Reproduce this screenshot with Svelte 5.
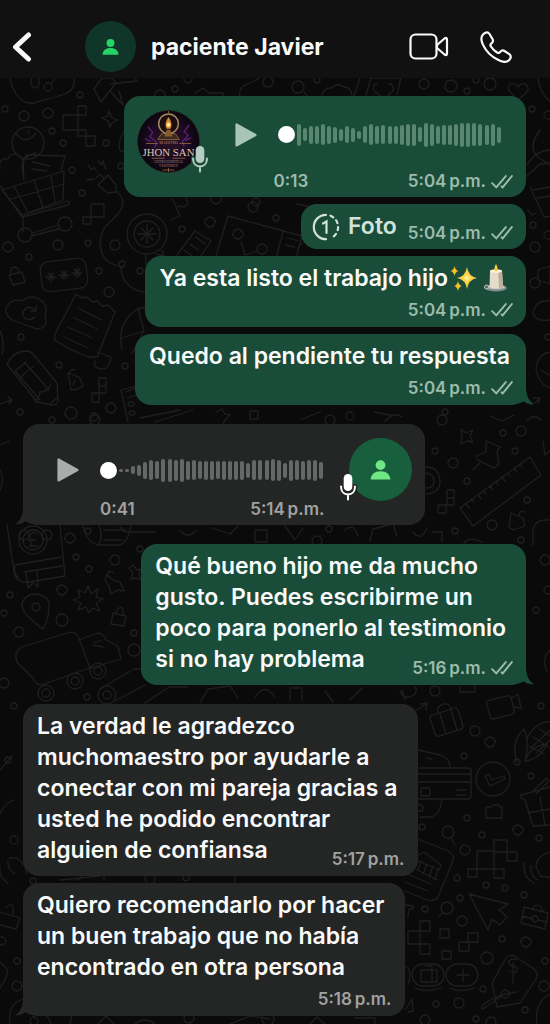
<script>
  const messages = [
    {
      kind: 'voice', out: true, length: '0:13', time: '5:04',
      bars: [22, 13, 18, 18, 21, 18, 16, 12, 17, 14, 8, 17, 21, 18, 19, 18, 18, 20, 22, 22, 15, 24, 22, 18, 20, 20, 22, 24, 24, 23, 22, 20, 22, 16]
    },
    { kind: 'photo', out: true, time: '5:04' },
    { kind: 'text', out: true, text: 'Ya esta listo el trabajo hijo', emoji: true, time: '5:04' },
    { kind: 'text', out: true, text: 'Quedo al pendiente tu respuesta', time: '5:04', tail: true },
    {
      kind: 'voice', out: false, length: '0:41', time: '5:14', tail: true, first: true,
      bars: [3, 3, 8, 11, 17, 20, 18, 23, 23, 21, 23, 19, 20, 18, 19, 19, 18, 19, 19, 19, 19, 15, 20, 20, 20, 22, 21, 15, 21, 20, 19, 20, 21, 17]
    },
    {
      kind: 'text', out: true, time: '5:16', tail: true, first: true, long: true,
      text: 'Qué bueno hijo me da mucho\ngusto. Puedes escribirme un\npoco para ponerlo al testimonio',
      last: 'si no hay problema'
    },
    {
      kind: 'text', out: false, time: '5:17', first: true, long: true,
      text: 'La verdad le agradezco\nmuchomaestro por ayudarle a\nconectar con mi pareja gracias a\nusted he podido encontrar',
      last: 'alguien de confiansa'
    },
    {
      kind: 'text', out: false, time: '5:18', tail: true, long: true,
      text: 'Quiero recomendarlo por hacer\nun buen trabajo que no había\nencontrado en otra persona'
    }
  ];

  /* Loose rings scattered between the wallpaper drawings: x, y, radius */
  const rings = [
    [5, 109, 3], [24, 116, 5], [48, 113, 5], [52, 131, 3], [80, 95, 3], [63, 143, 3], [106, 143, 3], [72, 170, 3], [82, 193, 3],
    [8, 247, 5], [29, 257, 3], [58, 245, 5], [88, 243, 3], [115, 245, 5], [99, 271, 3], [109, 292, 5], [21, 337, 3],
    [59, 365, 3], [125, 366, 3], [20, 412, 3], [71, 413, 6], [94, 417, 4], [111, 408, 5], [140, 271, 3], [121, 166, 3],
    [216, 199, 5], [253, 207, 5], [210, 222, 5], [182, 229, 3], [276, 218, 3],
    [70, 538, 5], [76, 557, 3], [89, 569, 3], [115, 560, 5], [62, 590, 5], [10, 595, 3], [4, 613, 3], [62, 620, 6],
    [19, 632, 5], [134, 633, 3], [134, 650, 6], [4, 683, 5], [14, 706, 3], [87, 697, 3], [140, 549, 3],
    [532, 109, 3], [533, 225, 3], [535, 247, 5], [548, 115, 4], [535, 283, 5], [548, 235, 4], [548, 337, 3], [445, 412, 3], [442, 420, 5],
    [330, 420, 5], [350, 416, 4], [52, 420, 3], [95, 420, 5], [521, 431, 5], [503, 433, 3], [515, 451, 3], [453, 463, 5], [435, 451, 3],
    [467, 481, 3], [527, 500, 3], [492, 525, 5], [455, 531, 3], [521, 540, 3], [88, 531, 3], [47, 535, 5], [24, 535, 5], [317, 541, 5], [329, 529, 3],
    [435, 691, 5], [475, 731, 5], [490, 742, 5], [464, 756, 3], [541, 706, 3], [531, 776, 3], [467, 818, 3], [422, 827, 3], [482, 835, 3],
    [518, 830, 5], [539, 838, 3], [465, 850, 5], [457, 878, 3], [486, 885, 3], [505, 888, 3], [524, 895, 3], [460, 898, 3],
    [425, 909, 3], [462, 921, 5], [502, 939, 3], [526, 942, 5], [487, 958, 6], [545, 961, 3], [544, 986, 5], [483, 989, 3], [436, 1004, 3],
    [459, 1003, 5], [525, 1010, 3], [476, 1019, 3], [491, 1022, 5], [425, 1020, 5], [2, 941, 4], [17, 961, 3], [17, 986, 5], [34, 1021, 4],
    [189, 1018, 5], [268, 1019, 6], [150, 879, 5], [186, 878, 3], [33, 881, 3], [175, 89, 3], [188, 79, 4], [317, 80, 3],
    [451, 86, 6], [467, 91, 3], [476, 80, 3], [490, 84, 6], [160, 95, 5], [424, 84, 5], [256, 202, 4], [548, 590, 4], [536, 610, 3], [545, 560, 5], [8, 760, 3], [14, 840, 4]
  ];
</script>

{#snippet person()}
  <svg class="person" viewBox="0 0 24 24" aria-hidden="true">
    <circle cx="12" cy="7" r="5.6" />
    <path d="M.8 23.5c0-5.7 4.6-9.5 11.2-9.5s11.200 3.800 11.200 9.500z" />
  </svg>
{/snippet}

{#snippet mic()}
  <svg class="mic" viewBox="0 0 18 28" aria-hidden="true">
    <path class="halo" d="M2 13.500c0 5 3 8 7 8s7-3 7-8M9 21.500v5M9 6.500v7" />
    <rect x="4.700" y="1" width="8.600" height="17" rx="4.300" />
    <path class="stand" d="M2 13.500c0 5 3 8 7 8s7-3 7-8M9 21.500v5" />
  </svg>
{/snippet}

{#snippet meta(m)}
  <span class="meta">
    <time>{m.time}&#8239;p.m.</time>
    {#if m.out}
      <svg class="ticks" viewBox="0 0 23 16" role="img" aria-label="Entregado">
        <path d="M1.200 9.200l4.300 4.500L15.500 1.800M11 12.500l1.200 1.200L21.800 1.800" />
      </svg>
    {/if}
  </span>
{/snippet}

{#snippet tail(m)}
  {#if m.tail}
    <svg class="tail" viewBox="0 0 26 20" aria-hidden="true">
      <path d="M0 20C7 20 12 18.500 15.500 16.300C18.500 18.800 22 19.500 26 19.200C21 16 18 11 18 2V0H4z" />
    </svg>
  {/if}
{/snippet}

<div class="app">
  <header>
    <button class="icon back" aria-label="Atrás">
      <svg viewBox="0 0 20 30"><path d="M16.500 3L3.500 15l13 12" /></svg>
    </button>
    <span class="avatar contact">{@render person()}</span>
    <h1>paciente Javier</h1>
    <button class="icon video" aria-label="Videollamada">
      <svg viewBox="0 0 40 28">
        <rect x="1.500" y="1.500" width="26" height="24" rx="5" />
        <path d="M28 12l7.500-6.500q2.500-1.500 2.500 1v14q0 2.500-2.500 1L28 15z" />
      </svg>
    </button>
    <button class="icon phone" aria-label="Llamar">
      <svg viewBox="0 0 32 32">
        <path d="M3 3.500C5.500.8 8 .8 9.500 3l3 5c1 1.800.4 3.200-1 4.300c-1.300 1-1.400 2-.6 3.200c1.700 2.600 3.700 4.500 6.200 6c1.300.8 2.200.6 3.200-.7c1.200-1.400 2.600-1.800 4.200-.8l4.800 3.200c2 1.400 2 3.800-.3 6c-2.800 2.500-7 2-11.500-.7C11 25.300 5.800 19.700 2.900 13.600C1 9.500.6 6.100 3 3.500z" />
      </svg>
    </button>
  </header>

  <main>
    <svg class="wallpaper" viewBox="0 78 550 946" preserveAspectRatio="xMidYMin slice" aria-hidden="true">
      {#each rings as [x, y, r]}
        <circle cx={x} cy={y} {r} />
      {/each}
      <!-- palette, hammer, search, cloud, paw, heart -->
      <path d="M10 78c3 17 13 27 24 25c10-3 22-6 31-9c8-3 10-9 9-16" />
      <ellipse cx="35" cy="82" rx="4" ry="6" /><circle cx="48" cy="87" r="4" /><path d="M51 84l4-6" />
      <path d="M94 89l8-11h10l4 5l-15 19zM111 84l26-3l-6-10M111 92l12 13l-4-14" />
      <path d="M195 93l8-5l6 5h14v4M304 92l4 6M322 95q2-8 10-7q5-6 12-1q7 0 8 8M240 96c-3-10 8-12 20-18M360 78l-6 18M366 95l5-17h30l-4 16M377 84c-5 0-5 8 0 9c5 6 11 5 13 0c5-2 4-9-1-9" />
      <circle cx="298" cy="87" r="6" /><circle cx="268" cy="82" r="5" />
      <path d="M518 100l-9-9c-4-6 5-11 9-4c5-7 13-1 9 5zM538 78q2 18 14 24" />
      <!-- pixels and sparkle -->
      <path d="M78 106h8v9h-8zM63 115h15v15H63zM78 130h8v6h-8zM86 136h9v10h-9zM109 111l3 7 6 2-6 3-2 4-2-6-6-3 6-2z" />
      <path d="M91 204h13v13H91zM83 217h8v7h-8zM99 378h7v15h-7zM99 386h7M92 393h7v9h-7z" />
      <!-- shopping cart with ball and fruit -->
      <circle cx="28" cy="143" r="16" /><path d="M16 134q10 12 20-1M19 137l-2-3M28 130l1 3M36 153q-6 1-12 6" />
      <path d="M0 169q-2-12 8-10q2-7 10-4q7 4 4 12l2 13M26 155l39 1-4 14M26 155q-4 7-2 20M33 162l17 4M33 169l14 2" />
      <path d="M2 190l62-19-1 29-41 15zM14 186l14 27M34 180l9 28M51 175l4 27M8 200l56-16M22 215l46-14q3 3 0 4l-46 12L0 186M23 217v15M32 233l27-8M31 236l28-7" />
      <circle cx="25" cy="235" r="7" /><circle cx="65" cy="224" r="7" />
      <!-- plug and cable -->
      <path d="M98 185l10-10 8 10v7l-8 1zM96 178l4-4M101 175l3 3M116 191c16 13 0 25-8 33c-12 12-10 35 5 40l8 3M88 165l4 5 2-3 3 5M98 161l4 4 1-4 3 8M87 180l7-1" />
      <circle cx="122" cy="264" r="3" />
      <path d="M121 267c0 15 12 26 28 25M119 145q2-12 9-18M119 145q1 10 6 5" />
      <!-- turntable and charts -->
      <circle cx="147" cy="234" r="20" /><circle cx="147" cy="234" r="13" />
      <path d="M147 225v18M138 234h18M141 228l12 12M153 228l-12 12M162 250l2 6-8-2M172 198l8 18M173 196q10-4 14 4q2 9-9 6M180 216l-10 4M146 255v10" />
      <path d="M177 255l18-24 16 10-12 18M184 250l8 6M190 244l8 6M196 237l9 7" />
      <path d="M216 256l12-40 74 20-6 22M283 232l-8 30M288 238l10 3M286 245l8 2M241 242l4 13M245 255l12-4" />
      <circle cx="238" cy="234" r="5" /><circle cx="262" cy="249" r="5" />
      <path d="M297 204l14 3-4 20M298 248l4-5" />
      <!-- padlock, password, cloud, receipt, pencil -->
      <path d="M9 275l13-3 3 10-12 3zM11 274q-1-7 4-7q4 1 4 6" />
      <rect x="41" y="260" width="46" height="30" rx="8" transform="rotate(-7 64 275)" />
      <path d="M51 272v10M46 277h10M48 273l6 7M54 273l-6 7M64 270v10M59 275h10M61 271l6 7M67 271l-6 7M77 268v10M72 273h10M74 269l6 7M80 269l-6 7" />
      <path d="M12 320q-10-8-4-15q5-7 14-4q10-8 20 0q6 5 3 14q4 13-8 14zM35 310q-5-5-10-1q-5 6 1 10q5 2 9-2M36 306v5h-5" />
      <path d="M76 294l6 4 5-1 5 5 5-1 5 5 6-1 7 7-18 45-8 0q-17-6-33-16q-3-2 0-9zM78 308l24 12M73 317l24 12M68 327l24 11M64 337l24 11M97 352l14 5q-2 13-9 12q-10-1-7-8" />
      <path d="M7 364q5-12 18-13q5 0 8 3l24 29 1 18q-2 5-6 4l-15-3zM14 372l12-10M20 379q6-9 13-12M35 402q5-5 5-10q8 0 11-8M25 363l24 27M16 372l24 28M51 403l7-6" />
      <path d="M68 373l11 4 4 9-5 3-7 1-2-12zM69 374q1-6 6-4M75 380l-2 5M0 331q5 10 2 23M0 404l8-3 4-1M8 397l4 3-3 4M122 349c-5-22 7-40 24-42M138 308l6 23-22 7M144 331l-12 22M122 390l17-5M121 390l7 32M126 392l12-5M127 398l10-3" />
      <ellipse cx="131" cy="404" rx="3" ry="2" /><ellipse cx="132" cy="413" rx="3" ry="2" />
      <!-- strip around the incoming voice note -->
      <path d="M0 445l9-4M0 470q5 10 0 20M140 418l40-8M155 422l38-12M216 412l6-3 3 5 5 1-5 5-2 4M250 411h8v8h-8zM300 420l20-8M374 412l16 3M385 421q10-10 17-4M490 416l12 5 12-6" />
      <path d="M461 429l5 4 7-3-3 6 3 6-6-1-6 3 1-7zM486 441l14 6-3 4 2 13-5 4-16-8-2-4 10-4zM480 463l-7 7M543 441l2 14 9-8M527 421q6-8 14-1" />
      <path d="M460 508l70-51 11 18-68 51zM466 504l3 4M472 499l2 3M478 495l3 4M484 491l2 3M490 486l3 4M496 482l2 3M502 477l3 4M508 473l2 3M514 468l3 4M520 464l2 3" />
      <path d="M426 467q13 0 14 14q0 12-14 13M426 473q8 1 8 8q0 7-8 7M447 490h7v15h-7zM447 498h7M438 505h8v8h-8zM511 513l12 5 2 8-12 4-4-3zM519 515q0-5 6-3M533 545v-15q2-10 12-10h5M432 532h10v10M413 532q8 10 14-4M370 541l3-12 20-5 4 12M463 545q5-10 19-3" />
      <!-- bank book, van, pin and burst -->
      <path d="M7 525l7 47q3 12 15 10l36-6-5-51M15 565l46-8M24 572l38-6M15 565q-2 8 3 12M26 572l2 16 5-5 5 4-1-17" />
      <circle cx="33" cy="540" r="14" /><circle cx="33" cy="540" r="10" />
      <path d="M37 534q-6-4-7 2l1 9M28 540h8M29 546h9M83 525q2 16 15 20h22q9-4 11-20M98 545q6-7 1-20M104 530h22M104 540h18M120 527l5 5h30" />
      <path d="M43 629q-21-15-21-24q1-10 14-11q14 2 13 13q0 11-6 22z" /><circle cx="36" cy="607" r="4" />
      <path d="M88 586l3 8 7-5-2 8 7 2-7 4 4 8-8-3-3 5-3-6-8 3 3-7-8-3 7-3-2-7 7 3zM107 575l6 5 7 2 4 9-6-1-7 4-2-8-4-6zM107 575q1-6 7-2M133 565l4 5 4-1-2 6 2 5-5-2-5 1 2-6-4-5zM113 613l13 3-2 10-13-2zM116 613q2-8 7-4v6" />
      <path d="M17 662q-4-10 5-15l45-14q8-2 11 3l12 32-46 16q-7 3-11-6zM80 640l14-6q9-3 12 6l12 6 3 13-30 9M94 643l8-3M93 645l10 2" />
      <circle cx="46" cy="693" r="8" /><circle cx="46" cy="693" r="4" /><circle cx="75" cy="681" r="8" /><circle cx="75" cy="681" r="4" /><circle cx="98" cy="671" r="8" /><circle cx="98" cy="671" r="4" />
      <circle cx="107" cy="695" r="9" /><circle cx="107" cy="695" r="4" />
      <path d="M100 689l34-20h10M115 701l30-16M145 703l24-16h18M200 703l8-14 22-3 8 12M255 697q10-15 20 0M290 700v-12h12v12M325 691l8 11M350 700l12-12M400 691q4 10 14 4q4-5 1-8M402 690l3 10M460 686v6h15v-7" />
      <!-- right column -->
      <path d="M527 165q8-14 23-15M540 130q-13 18-2 27l12 8M527 176l13-12 10-1M530 187l14 30 8-1M533 190l17-3M537 198l13-2M528 210l4 5 4-2M538 270l12-4v18l-12-4zM550 301q-14-2-17 12q2 9 17 7M550 352q-12 2-14 16q2 16 14 20M540 370l10 5M530 405l6-3 3-3M533 398l7 0-2 6M550 650q-9 8-3 22" />
      <path d="M415 711l11-7M421 704l6-1-1 7" />
      <rect x="432" y="711" width="29" height="22" rx="3" transform="rotate(-18 447 722)" /><path d="M440 714l6 20M451 710l6 20M438 713q-2-7 5-9q7-1 8 5" />
      <rect x="488" y="698" width="25" height="19" rx="3" transform="rotate(-14 500 707)" /><path d="M512 698l6-4 3 14-7-1" />
      <path d="M517 762q-7-20 7-33q6 12 1 32q5-15 22-17q-7 15-22 17M527 738q10-17 23-16M529 746l15 8M533 737l16 10M539 729l11 7M531 748l19-18M536 753l14-13" />
      <circle cx="517" cy="762" r="3" />
      <path d="M418 750l22 5q10 3 10 12M426 758l6 1M418 768h50q3 0 3 3v25q0 3-3 3h-50M418 774h53M418 782h53M457 790h9M457 795h9M442 799q-2 17-12 18h-10M418 804q8 2 4 7h-5" />
      <rect x="421" y="788" width="9" height="8" rx="2" />
      <circle cx="493" cy="779" r="17" /><path d="M485 776l4-2 3 6 12-4 1 3-15 7z" />
      <path d="M486 807h5l2-2h6l1 2h2v11h-16zM521 795l29-8M521 795q-1 4 4 5l8 26 17-1M532 792l15-14 2 3-13 13M528 813l22-4M540 797l5 28" />
      <circle cx="448" cy="832" r="6" /><path d="M451 838l4 7M494 840h13v12h-13zM477 851h17v18h-17zM494 851v18h10v9h-10zM507 852h10v9h-10zM468 869h9v8h-9zM477 869h17" />
      <path d="M418 839l30 12q8 4 4 12l-14 34q-4 5-11 3l-22-9M407 874l24 10M405 882l23 9M418 855l6-3 17 13-2 5-21-9M421 861l-3 9M427 864l-4 10M433 866l-4 11M438 869l-3 11M417 870l20 10" />
      <path d="M524 863q-1 15 10 20M531 866q-1 10 7 14M550 852q-14 4-14 15l5 10q4-1 9 1" />
      <circle cx="447" cy="908" r="6" /><path d="M443 913l-5 4M405 905l8 1v3h-4l-1 8M469 894l39 10-9 6 8 7-7 8-8-6-4 11zM524 907l24 6-3 16-24-6zM533 909q1-5 7-3l3 5M522 916l11 3M538 920l9 2" />
      <circle cx="535" cy="919" r="3" />
      <path d="M420 921h10v10h-10zM408 931h12v13h-12zM420 931v23h10v-10h-22M440 929h9v9h-9zM468 933h10v9h-10zM459 942h10v9h-10zM442 951h9v8h-9z" />
      <rect x="412" y="964" width="32" height="22" rx="11" /><rect x="446" y="964" width="32" height="22" rx="11" /><path d="M421 970h16v12h-16zM425 966h7v16M457 975h12M463 969v13M405 966q8 4 3 18M415 988q10 5 26 0M450 988q10 5 24 0" />
      <path d="M492 983l14-25q6-5 10-1l18 12q5 5 2 10l-16 24-23 4zM504 994l-18 13q-5 4-4-1q10-10 34-14M509 971q8 3 8-1q-1-4-4-4q-5-1-4-5q3-4 8-1M513 963v20M405 1010l7-11 1 12-5 1M537 1024q-3-22 13-30" />
      <circle cx="505" cy="994" r="4" />
      <!-- left edge and foot -->
      <path d="M0 866q-2 11 8 17M8 860q-1 9 7 14M10 858q9-2 15 9l2 7M0 912l20 6-4 11-16-4M6 908q2-5 7-2v8M0 962l8 8-3 10-5 8M0 770l12-14M14 800q-10 4-14 14M10 1024q-3-20 13-25M36 1013q12-2 15 11M70 1024l2-9M98 1024l8-8 8 8M135 1024q10-8 20 0M230 1024l20-8 20 3M310 1024l7-7 8 7M355 1018h20v6M60 880l40-4M78 880l4-4M104 880v-4M235 882v-7h12" />
      <path d="M180 530q8 10 16 0M212 528l18 6 8-8M255 530h12v12h-12zM285 526l10 14 8-12M345 530q9-8 13 6" />
    </svg>

    {#each messages as m}
      <article class="bubble {m.kind}" class:out={m.out} class:first={m.first} class:long={m.long}>
        {@render tail(m)}
        {#if m.kind === 'voice'}
          <span class="portrait">
            {#if m.out}
              <svg class="avatar" viewBox="0 0 64 64" role="img" aria-label="Maestro Jhon San">
                <defs>
                  <radialGradient id="glow"><stop offset="0" stop-color="#2c1020" /><stop offset=".6" stop-color="#1d0b25" /><stop offset="1" stop-color="#09060c" /></radialGradient>
                </defs>
                <circle cx="32" cy="32" r="31.500" fill="url(#glow)" stroke="#2a1d22" />
                <path d="M11 17l5 6-3 4 7 6-2 5M53 15l-5 7 4 4-6 6 2 5M8 29l6 3M55 28l-6 3" fill="none" stroke="#55206a" stroke-width="1.500" />
                <path d="M21 30l4-6h14l4 6z" fill="#3c2a20" stroke="#7c6040" />
                <circle cx="32" cy="14" r="10" fill="#1b0e10" stroke="#a48a5d" stroke-width="1.500" />
                <path d="M28 27l2-7h4l2 7z" fill="#8a5a2c" />
                <path d="M32 7q5 7 2 12h-4q-3-5 2-12z" fill="#d98a35" /><circle cx="32" cy="15" r="2" fill="#ffe9a5" />
                <path d="M9 34h12M43 34h12M15 49h13M36 49h13M26 61h12M32 59v4M32 1v3" stroke="#9b6e42" stroke-width=".8" />
                <text x="32" y="35" font-size="4" fill="#b48d63" text-anchor="middle">MAESTRO</text>
                <text x="32" y="47" font-size="11" fill="#dbc9ae" text-anchor="middle">JHON SAN</text>
                <text x="32" y="54" font-size="3" fill="#a08777" text-anchor="middle">CENTRO ESPIRITUAL</text>
                <text x="32" y="58" font-size="3" fill="#a08777" text-anchor="middle">Y ESOTERICO</text>
              </svg>
            {:else}
              <span class="avatar">{@render person()}</span>
            {/if}
            {@render mic()}
          </span>
          <button class="icon play" aria-label="Reproducir">
            <svg viewBox="0 0 22 24"><path d="M1.500 1.500v21L20.500 12z" /></svg>
          </button>
          <div class="track">
            <i class="knob"></i>
            <div class="wave">
              {#each m.bars as h}<i style:height="{h}px"></i>{/each}
            </div>
          </div>
          <div class="info"><span>{m.length}</span>{@render meta(m)}</div>
        {:else if m.kind === 'photo'}
          <svg class="once" viewBox="0 0 28 28" aria-hidden="true">
            <path d="M14 1.800a12.200 12.200 0 0 0 0 24.400" />
            <path stroke-dasharray="3.200 4" d="M18.500 2.700a12.200 12.200 0 0 1 0 22.600" />
            <path d="M11 10.500l3.500-2v11.500" />
          </svg>
          <span class="label">Foto</span>
          {@render meta(m)}
        {:else}
          <p>{m.text}{#if m.emoji}<svg class="emoji sparkles" viewBox="0 0 28 28" role="img" aria-label="destellos">
              <path fill="#fbd043" d="M17 3q1.500 9.500 10 11q-8.500 1.500-10 11q-1.500-9.500-10-11q8.500-1.500 10-11z" />
              <path fill="#ffe98a" d="M17 9q.8 4.300 5 5q-4.200.7-5 5q-.8-4.300-5-5q4.200-.7 5-5z" />
              <path fill="#f5bf2c" d="M4.500 2q.8 4.200 4 5q-3.200.8-4 5q-.8-4.200-4-5q3.200-.8 4-5zM8 17q.8 4.200 4 5q-3.200.8-4 5q-.8-4.200-4-5q3.200-.8 4-5z" />
            </svg><svg class="emoji" viewBox="0 0 28 28" role="img" aria-label="vela">
              <ellipse cx="14" cy="24" rx="11" ry="3.500" fill="#7d8a8a" />
              <ellipse cx="14" cy="23" rx="9" ry="2.500" fill="#b9c1bd" />
              <circle cx="4.500" cy="23" r="2" fill="#56635f" stroke="#c0c9c4" />
              <path d="M8 7q6-3 12 0l1 16q-7 3-13.500 0z" fill="#e5dccb" />
              <path d="M16 6q3 0 4 1l1 16q-2 1-4 1z" fill="#bfae9c" />
              <ellipse cx="14" cy="7" rx="6" ry="1.800" fill="#fff1cd" />
              <path d="M14 0q2.500 4 1 7h-2q-1.500-3 1-7z" fill="#ffc83c" />
            </svg>{/if}</p>
          {#if m.last}
            <div class="ending"><p>{m.last}</p>{@render meta(m)}</div>
          {:else}
            {@render meta(m)}
          {/if}
        {/if}
      </article>
    {/each}
  </main>
</div>

<style>
  :global(body) {
    margin: 0;
    background: #0a0a0a;
  }

  .app {
    min-height: 100vh;
    display: flex;
    flex-direction: column;
    color: #fafafa;
    font-family: Inter, "Liberation Sans", sans-serif;
    font-weight: 600;
  }

  header {
    display: flex;
    align-items: center;
    padding: 21px 38px 6px 12px;
    background: #111;
  }

  h1 {
    flex: 1;
    margin: 0 0 0 15px;
    font-size: 23px;
    line-height: 30px;
    font-weight: 700;
  }

  .icon {
    display: flex;
    padding: 0;
    border: 0;
    background: none;
    color: inherit;
  }

  .icon svg {
    width: 100%;
    fill: none;
    stroke: currentColor;
    stroke-width: 2.2;
    stroke-linecap: round;
    stroke-linejoin: round;
  }

  .icon.back { width: 20px; margin-right: 53px; }
  .icon.back svg { stroke-width: 5; }
  .video { width: 40px; margin-right: 31px; }
  .phone { width: 32px; }

  .avatar {
    display: flex;
    align-items: center;
    justify-content: center;
    width: 63px;
    height: 63px;
    border-radius: 50%;
    background: #18603d;
    color: #6fe785;
    font-family: "Liberation Serif", serif;
    font-weight: 400;
  }

  .contact {
    width: 51px;
    height: 51px;
    background: #103629;
    color: #25d366;
  }

  .person {
    width: 21px;
    fill: currentColor;
  }

  .contact .person { width: 17px; }

  main {
    position: relative;
    flex: 1;
    display: flex;
    flex-direction: column;
    align-items: flex-start;
    gap: 7px;
    padding: 18px 24px 8px 23px;
    overflow: hidden;
  }

  .wallpaper {
    position: absolute;
    inset: 0;
    width: 100%;
    height: 100%;
    fill: none;
    stroke: #1f1f1f;
    stroke-width: 1.3;
    stroke-linecap: round;
    stroke-linejoin: round;
  }

  .bubble {
    --fill: #242626;
    --soft: #a0a2a2;
    --bar: #666868;
    position: relative;
    box-sizing: border-box;
    max-width: 100%;
    padding: 7px 14px 5px;
    border-radius: 16px;
    background: var(--fill);
  }

  .out {
    --fill: #194d39;
    --soft: #9dbbad;
    --bar: #588671;
    align-self: flex-end;
    padding-right: 13px;
  }

  .first { margin-top: 12px; }

  .tail {
    position: absolute;
    left: -8px;
    bottom: 0;
    width: 26px;
    height: 20px;
    fill: var(--fill);
    transform: scaleX(-1);
  }

  .out .tail {
    left: auto;
    right: -8px;
    transform: none;
  }

  p {
    margin: 0;
    padding-right: 3px;
    font-size: 23px;
    line-height: 31px;
    white-space: pre-line;
  }

  .long p { padding-right: 7px; }

  .emoji {
    width: 28px;
    height: 28px;
    vertical-align: -6px;
  }

  .sparkles { margin: 0 4px 0 2px; }

  .meta {
    display: flex;
    align-items: center;
    justify-content: flex-end;
    gap: 5px;
    height: 24px;
    color: var(--soft);
    font-size: 17px;
    line-height: 24px;
  }

  .text .meta { margin-top: 4px; }

  .ending {
    display: flex;
    justify-content: space-between;
    gap: 16px;
  }

  .ending .meta { margin-top: 12px; }

  .ticks {
    width: 22px;
    height: 16px;
    fill: none;
    stroke: currentColor;
    stroke-width: 2;
    stroke-linecap: round;
    stroke-linejoin: round;
  }

  .photo {
    display: flex;
    align-items: center;
    padding: 0 13px 0 11px;
    height: 45px;
    color: #d2e2da;
  }

  .photo .meta {
    margin: 12px 0 0 11px;
  }

  .label {
    margin-left: 8px;
    font-size: 23px;
    line-height: 31px;
  }

  .once {
    width: 28px;
    fill: none;
    stroke: currentColor;
    stroke-width: 2.2;
    stroke-linecap: round;
  }

  .voice {
    display: grid;
    grid-template-columns: 63px 22px 1fr;
    grid-template-rows: 77px 24px;
    width: 80%;
    padding: 0 13px;
  }

  .portrait {
    position: relative;
    grid-row: 1 / 3;
    padding-top: 14px;
  }

  .mic {
    position: absolute;
    right: -9px;
    top: 49px;
    width: 18px;
    height: 28px;
    fill: #b5ccc2;
    color: #b5ccc2;
  }

  .mic path {
    fill: none;
    stroke: currentColor;
    stroke-width: 2;
    stroke-linecap: round;
  }

  .mic .halo {
    stroke: var(--fill);
    stroke-width: 5;
  }

  .play {
    align-self: center;
    width: 22px;
    color: #a8c5b8;
  }

  .play svg {
    fill: currentColor;
  }

  .voice .play { margin-left: 35px; }

  .track {
    display: flex;
    align-items: center;
    gap: 2px;
    margin: 0 12px 0 56px;
  }

  .knob {
    flex: none;
    width: 17px;
    height: 17px;
    border-radius: 50%;
    background: #fff;
  }

  .wave {
    flex: 1;
    display: flex;
    align-items: center;
    justify-content: space-between;
  }

  .wave i {
    width: 4px;
    border-radius: 2px;
    background: var(--bar);
  }

  .info {
    grid-column: 3;
    display: flex;
    justify-content: space-between;
    height: 17px;
    margin-left: 52px;
    color: var(--soft);
    font-size: 17px;
    line-height: 17px;
  }

  .info .meta {
    height: 17px;
    line-height: 17px;
  }

  .voice:not(.out) {
    grid-template-columns: 22px 1fr 63px;
  }

  .voice:not(.out) .portrait {
    grid-area: 1 / 3 / 3;
  }

  .voice:not(.out) .mic {
    left: -10px;
    fill: #fff;
    color: #fff;
  }

  .voice:not(.out) .play {
    grid-area: 1 / 1;
    margin: 15px 0 0 21px;
    color: #aaacac;
  }

  .voice:not(.out) .track {
    grid-area: 1 / 2;
    margin: 15px 26px 0 42px;
  }

  .voice:not(.out) .info {
    grid-area: 2 / 2;
    margin: 0 25px 0 42px;
  }
</style>
